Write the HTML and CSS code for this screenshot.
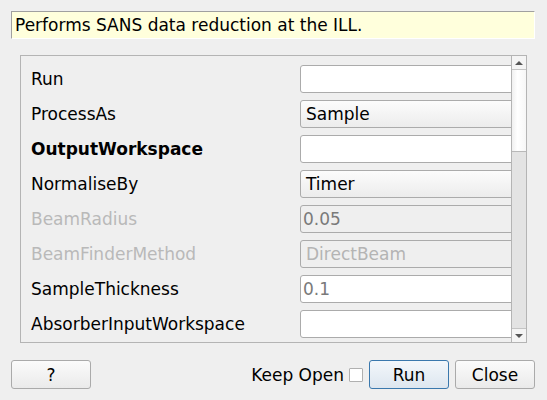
FILE: index.html
```html
<!DOCTYPE html>
<html>
<head>
<meta charset="utf-8">
<link rel="stylesheet" href="styles.css">
</head>
<body>
<div class="dialog">
  <div class="desc">Performs SANS data reduction at the ILL.</div>
  <div class="frame">
    <div class="viewport">
      <div class="rows">
        <div class="row"><span class="label">Run</span><div class="field edit"></div></div>
        <div class="row"><span class="label">ProcessAs</span><div class="field combo">Sample</div></div>
        <div class="row"><span class="label bold">OutputWorkspace</span><div class="field edit"></div></div>
        <div class="row"><span class="label">NormaliseBy</span><div class="field combo">Timer</div></div>
        <div class="row"><span class="label disabled">BeamRadius</span><div class="field edit off placeholder">0.05</div></div>
        <div class="row"><span class="label disabled">BeamFinderMethod</span><div class="field combo off">DirectBeam</div></div>
        <div class="row"><span class="label">SampleThickness</span><div class="field edit placeholder">0.1</div></div>
        <div class="row"><span class="label">AbsorberInputWorkspace</span><div class="field edit"></div></div>
      </div>
    </div>
    <div class="scrollbar">
      <div class="sb-btn"><span class="arrow up"></span></div>
      <div class="sb-handle"></div>
      <div class="sb-track"></div>
      <div class="sb-btn bottom"><span class="arrow down"></span></div>
    </div>
  </div>
  <div class="buttons">
    <button class="btn">?</button>
    <div class="spacer"></div>
    <span class="keep">Keep Open</span>
    <span class="check"></span>
    <button class="btn default">Run</button>
    <button class="btn">Close</button>
  </div>
</div>
</body>
</html>
```
FILE: styles.css
```css
html, body {
  margin: 0;
  padding: 0;
  background: #efefef;
}
body {
  font-family: "DejaVu Sans", sans-serif;
  font-size: 17px;
  color: #000;
  width: 547px;
  height: 400px;
  overflow: hidden;
}
.dialog {
  display: flex;
  flex-direction: column;
  padding: 11px 12px 0 11px;
}
.desc {
  height: 28px;
  box-sizing: border-box;
  background: #ffffdc;
  border-top: 1px solid #a0a0a0;
  border-left: 1px solid #a0a0a0;
  border-bottom: 1px solid #ffffff;
  border-right: 1px solid #ffffff;
  padding: 0 3px;
  line-height: 26px;
  white-space: nowrap;
}
.frame {
  margin: 16px 8px 0 9px;
  height: 288px;
  box-sizing: border-box;
  border: 1px solid #b4b4b4;
  display: flex;
}
.viewport {
  flex: 1;
  overflow: hidden;
}
.rows {
  display: flex;
  flex-direction: column;
  gap: 7px;
  padding: 9px 0 0 10px;
}
.row {
  display: flex;
  align-items: center;
  height: 28px;
}
.label {
  width: 269px;
  flex: none;
  white-space: nowrap;
}
.bold { font-weight: bold; }
.disabled { color: #b9b9b9; }
.field {
  flex: none;
  width: 240px;
  height: 28px;
  box-sizing: border-box;
  border: 1px solid #ababab;
  border-radius: 3px;
  background: #fff;
  line-height: 26px;
  padding: 0 2px;
  white-space: nowrap;
}
.combo {
  padding-left: 5px;
  background: linear-gradient(#fcfcfc, #ececec);
}
.edit.off {
  background: #efefef;
}
.combo.off {
  background: #efefef;
  color: #b4b4b4;
}
.placeholder { color: #7a7a7a; }
.scrollbar {
  width: 14px;
  flex: none;
  border-left: 1px solid #b4b4b4;
  display: flex;
  flex-direction: column;
}
.sb-btn {
  height: 13px;
  flex: none;
  background: #f4f4f4;
  border-bottom: 1px solid #c4c4c4;
  display: flex;
  align-items: center;
  justify-content: center;
}
.sb-btn.bottom {
  border-bottom: none;
  border-top: 1px solid #c4c4c4;
}
.arrow {
  width: 0;
  height: 0;
  border-left: 4px solid transparent;
  border-right: 4px solid transparent;
}
.arrow.up { border-bottom: 4px solid #555; }
.arrow.down { border-top: 4px solid #555; }
.sb-handle {
  height: 81px;
  flex: none;
  background: linear-gradient(90deg, #f0f0f0, #ffffff 40%, #f6f6f6);
  border-bottom: 1px solid #b8b8b8;
}
.sb-track {
  flex: 1;
  background: #e3e3e3;
}
.buttons {
  display: flex;
  align-items: center;
  margin-top: 17px;
  height: 29px;
}
.btn {
  font-family: "DejaVu Sans", sans-serif;
  font-size: 17px;
  color: #000;
  width: 80px;
  height: 29px;
  box-sizing: border-box;
  border: 1px solid #aaaaaa;
  border-radius: 3px;
  background: linear-gradient(#fbfbfb, #eaeaea);
  padding: 0;
  margin: 0;
}
.btn.default {
  border-color: #3a78ad;
  background: linear-gradient(#f3f7fb, #dde6ef);
  margin-right: 6px;
}
.spacer { flex: 1; }
.keep {
  margin-right: 5px;
  white-space: nowrap;
}
.check {
  width: 14px;
  height: 14px;
  box-sizing: border-box;
  border: 1px solid #b0b0b0;
  background: #fff;
  margin-right: 6px;
  border-radius: 1px;
}
```
